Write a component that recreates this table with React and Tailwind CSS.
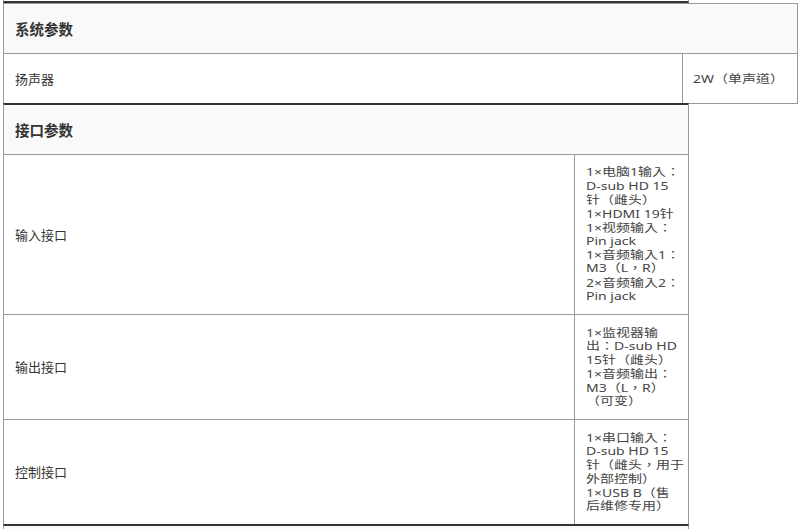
import React from "react";

const valFont =
  "font-['Noto_Sans','Noto_Sans_CJK_TC',sans-serif] text-[14px] text-[#444] whitespace-nowrap";
const label =
  "font-['Noto_Sans_CJK_SC',sans-serif] text-[13px] text-[#333] whitespace-nowrap";
const head =
  "font-['Noto_Sans_CJK_SC',sans-serif] text-[14.5px] font-bold text-[#333]";

function Lines({ items }) {
  return (
    <div className="flex flex-col scale-y-[0.8] origin-center">
      {items.map((t, i) => (
        <div key={i} className={`${valFont} leading-[17.2px]`}>
          {t}
        </div>
      ))}
    </div>
  );
}

function Row({ name, lines, h, last }) {
  return (
    <div className={`flex ${h} ${last ? "" : "border-b border-[#999]"}`}>
      <div className="w-[571px] flex items-center pl-[11px] border-r border-[#999]">
        <span className={label}>{name}</span>
      </div>
      <div className="flex-1 flex items-center pl-[11px]">
        <Lines items={lines} />
      </div>
    </div>
  );
}

export default function App() {
  return (
    <div className="w-[800px] h-[529px] bg-white overflow-hidden">
      <div className="ml-[3px] w-[686px] h-[3px] border-x border-x-[#999] border-b-2 border-b-[#333]" />

      <div className="ml-[3px] w-[795px] border-x border-t border-[#999]">
        <div className="h-[50px] bg-[#f9f9f9] border-b border-[#999] flex items-center pl-[11px]">
          <span className={head}>系统参数</span>
        </div>
        <div className="h-[50px] flex border-b border-[#999]">
          <div className="w-[679px] flex items-center pl-[11px] border-r border-[#999]">
            <span className={label}>扬声器</span>
          </div>
          <div className="flex-1 flex items-center pl-[10px]">
            <span className={`${valFont} leading-[17px] inline-block scale-y-[0.8]`}>2W（单声道）</span>
          </div>
        </div>
      </div>

      <div className="-mt-px ml-[3px] w-[686px] border-x border-x-[#999] border-t-2 border-t-[#333]">
        <div className="h-[50px] bg-[#f9f9f9] border-b border-[#999] flex items-center pl-[11px]">
          <span className={head}>接口参数</span>
        </div>
        <Row
          name="输入接口"
          h="h-[160px]"
          lines={[
            "1×电脑1输入：",
            "D-sub HD 15",
            "针（雌头）",
            "1×HDMI 19针",
            "1×视频输入：",
            "Pin jack",
            "1×音频输入1：",
            "M3（L，R）",
            "2×音频输入2：",
            "Pin jack",
          ]}
        />
        <Row
          name="输出接口"
          h="h-[105px]"
          lines={[
            "1×监视器输",
            "出：D-sub HD",
            "15针（雌头）",
            "1×音频输出：",
            "M3（L，R）",
            "（可变）",
          ]}
        />
        <Row
          name="控制接口"
          h="h-[104px]"
          last
          lines={[
            "1×串口输入：",
            "D-sub HD 15",
            "针（雌头，用于",
            "外部控制）",
            "1×USB B（售",
            "后维修专用）",
          ]}
        />
      </div>

      <div className="ml-[3px] w-[686px] h-[5px] bg-[#f9f9f9] border-x border-x-[#999] border-t-2 border-t-[#333]" />
    </div>
  );
}
